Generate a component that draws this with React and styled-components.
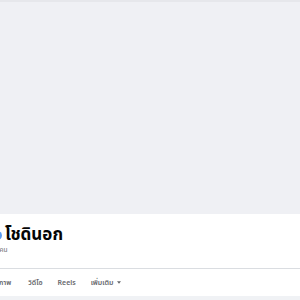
import styled, { createGlobalStyle } from "styled-components";

const GlobalStyle = createGlobalStyle`
  html, body {
    margin: 0;
    padding: 0;
    background: #f0f2f5;
    font-family: "Noto Sans Thai", "Noto Sans", "Liberation Sans", sans-serif;
    overflow: hidden;
  }
`;

const tabs = ["รูปภาพ", "วิดีโอ", "Reels"];

export default function App() {
  return (
    <Page>
      <GlobalStyle />
      <TopStrip />
      <Cover />
      <Header>
        <Info>
          <NameRow>
            <Badge />
            <Name>โชดินอก</Name>
          </NameRow>
          <Friends>เพื่อน 245 คน</Friends>
        </Info>
        <Divider />
        <Tabs>
          {tabs.map((t) => (
            <Tab key={t}>{t}</Tab>
          ))}
          <Tab>
            เพิ่มเติม
            <Caret viewBox="0 0 8 5">
              <path d="M0 0h8L4 5z" fill="currentColor" />
            </Caret>
          </Tab>
        </Tabs>
      </Header>
    </Page>
  );
}

const Page = styled.div`
  width: 300px;
  height: 300px;
  overflow: hidden;
  display: flex;
  flex-direction: column;
  background: #f0f2f5;
`;
const TopStrip = styled.div`
  height: 2px;
  background: #e6e7eb;
`;
const Cover = styled.div`
  height: 212px;
  background: #eff0f4;
`;
const Header = styled.div`
  height: 82px;
  background: #ffffff;
  display: flex;
  flex-direction: column;
`;
const Info = styled.div`
  height: 54px;
  display: flex;
  flex-direction: column;
  justify-content: flex-start;
  padding-top: 11px;
  box-sizing: border-box;
`;
const NameRow = styled.div`
  display: flex;
  align-items: center;
  gap: 3px;
  margin-left: -7px;
`;
const Badge = styled.span`
  width: 9px;
  height: 9px;
  border-radius: 50%;
  background: #5b9cf0;
`;
const Name = styled.h1`
  margin: 0;
  font-size: 17px;
  font-weight: 700;
  line-height: 21px;
  color: #050505;
`;
const Friends = styled.div`
  margin-left: -29px;
  font-size: 6.5px;
  line-height: 9px;
  color: #65676b;
`;
const Divider = styled.div`
  height: 1px;
  background: #dadde1;
`;
const Tabs = styled.nav`
  flex: 1;
  display: flex;
  align-items: center;
  gap: 15px;
  margin-left: -9px;
`;
const Tab = styled.span`
  display: flex;
  align-items: center;
  gap: 4px;
  font-size: 7px;
  font-weight: 600;
  color: #65676b;
  &:first-child {
    margin-right: 2px;
  }
`;
const Caret = styled.svg`
  width: 4px;
  height: 3px;
`;
